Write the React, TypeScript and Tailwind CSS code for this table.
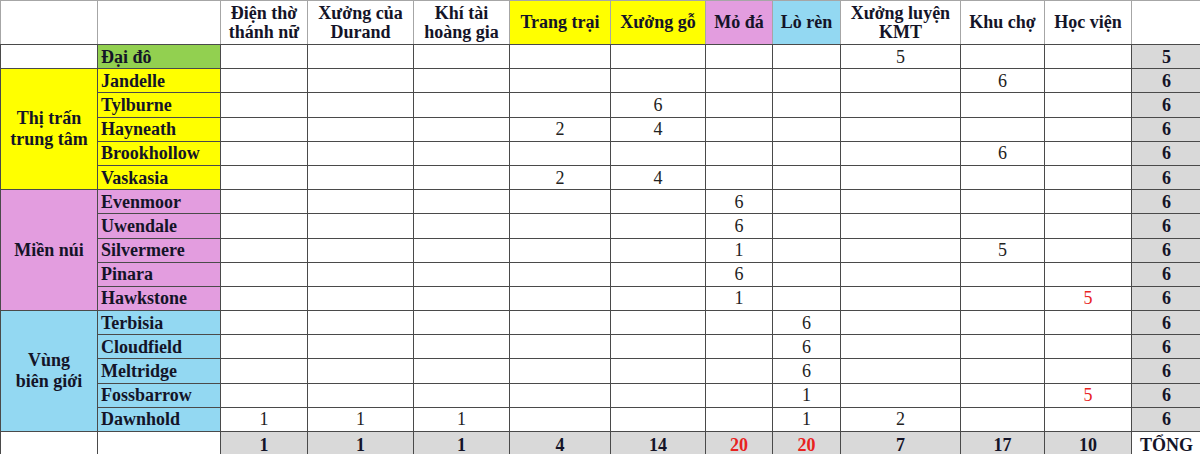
const cols = [
  { label: ["Điện thờ", "thánh nữ"], w: "w-[87px]", bg: "bg-white" },
  { label: ["Xưởng của", "Durand"], w: "w-[106px]", bg: "bg-white" },
  { label: ["Khí tài", "hoàng gia"], w: "w-[96px]", bg: "bg-white" },
  { label: ["Trang trại"], w: "w-[101px]", bg: "bg-[#ffff00]" },
  { label: ["Xưởng gỗ"], w: "w-[95px]", bg: "bg-[#ffff00]" },
  { label: ["Mỏ đá"], w: "w-[67px]", bg: "bg-[#e39ddf]" },
  { label: ["Lò rèn"], w: "w-[68px]", bg: "bg-[#93d8f2]" },
  { label: ["Xưởng luyện", "KMT"], w: "w-[120px]", bg: "bg-white" },
  { label: ["Khu chợ"], w: "w-[84px]", bg: "bg-white" },
  { label: ["Học viện"], w: "w-[87px]", bg: "bg-white" },
];

type Row = {
  name: string;
  bg: string;
  vals: Record<number, number>;
  red?: number[];
  total: number;
};

const groups: { region: string[]; bg: string; rows: Row[] }[] = [
  {
    region: ["Thị trấn", "trung tâm"],
    bg: "bg-[#ffff00]",
    rows: [
      { name: "Jandelle", bg: "bg-[#ffff00]", vals: { 8: 6 }, total: 6 },
      { name: "Tylburne", bg: "bg-[#ffff00]", vals: { 4: 6 }, total: 6 },
      { name: "Hayneath", bg: "bg-[#ffff00]", vals: { 3: 2, 4: 4 }, total: 6 },
      { name: "Brookhollow", bg: "bg-[#ffff00]", vals: { 8: 6 }, total: 6 },
      { name: "Vaskasia", bg: "bg-[#ffff00]", vals: { 3: 2, 4: 4 }, total: 6 },
    ],
  },
  {
    region: ["Miền núi"],
    bg: "bg-[#e39ddf]",
    rows: [
      { name: "Evenmoor", bg: "bg-[#e39ddf]", vals: { 5: 6 }, total: 6 },
      { name: "Uwendale", bg: "bg-[#e39ddf]", vals: { 5: 6 }, total: 6 },
      { name: "Silvermere", bg: "bg-[#e39ddf]", vals: { 5: 1, 8: 5 }, total: 6 },
      { name: "Pinara", bg: "bg-[#e39ddf]", vals: { 5: 6 }, total: 6 },
      { name: "Hawkstone", bg: "bg-[#e39ddf]", vals: { 5: 1, 9: 5 }, red: [9], total: 6 },
    ],
  },
  {
    region: ["Vùng", "biên giới"],
    bg: "bg-[#93d8f2]",
    rows: [
      { name: "Terbisia", bg: "bg-[#93d8f2]", vals: { 6: 6 }, total: 6 },
      { name: "Cloudfield", bg: "bg-[#93d8f2]", vals: { 6: 6 }, total: 6 },
      { name: "Meltridge", bg: "bg-[#93d8f2]", vals: { 6: 6 }, total: 6 },
      { name: "Fossbarrow", bg: "bg-[#93d8f2]", vals: { 6: 1, 9: 5 }, red: [9], total: 6 },
      { name: "Dawnhold", bg: "bg-[#93d8f2]", vals: { 0: 1, 1: 1, 2: 1, 6: 1, 7: 2 }, total: 6 },
    ],
  },
];

const totals = [1, 1, 1, 4, 14, 20, 20, 7, 17, 10];

const cell = "border border-[#4a4a4a] p-0";

function Values({ row }: { row: Row }) {
  return (
    <>
      {cols.map((_, i) => (
        <td
          key={i}
          className={`${cell} text-center bg-white ${row.red?.includes(i) ? "text-[#e8231f]" : "text-[#222]"}`}
        >
          {row.vals[i] ?? ""}
        </td>
      ))}
      <td className={`${cell} bg-[#d9d9d9] text-center font-bold`}>{row.total}</td>
    </>
  );
}

export default function App() {
  return (
    <div className="w-[1200px] h-[454px] overflow-hidden bg-white [font-family:Liberation_Serif,serif]">
      <table className="table-fixed border-collapse w-[1201px] text-[18px] leading-[20px] text-[#141428]">
        <colgroup>
          <col className="w-[97px]" />
          <col className="w-[123px]" />
          {cols.map((c, i) => (
            <col key={i} className={c.w} />
          ))}
          <col className="w-[70px]" />
        </colgroup>
        <thead>
          <tr className="h-[44px]">
            <th className="border border-[#a6a6a6] border-b-[#4a4a4a] bg-white p-0" />
            <th className="border border-[#a6a6a6] border-b-[#4a4a4a] bg-white p-0" />
            {cols.map((c, i) => (
              <th
                key={i}
                className={`border border-[#a6a6a6] border-b-[#4a4a4a] p-0 font-bold leading-[19px] ${c.bg}`}
              >
                {c.label.map((l) => (
                  <div key={l}>{l}</div>
                ))}
              </th>
            ))}
            <th className="border border-[#a6a6a6] border-b-[#4a4a4a] bg-white p-0" />
          </tr>
        </thead>
        <tbody>
          <tr className="h-[24.2px]">
            <td className={`${cell} bg-white`} />
            <td className={`${cell} bg-[#92d050] pl-[3px] font-bold`}>Đại đô</td>
            <Values row={{ name: "Đại đô", bg: "", vals: { 7: 5 }, total: 5 }} />
          </tr>
          {groups.map((g) =>
            g.rows.map((r, j) => (
              <tr key={r.name} className="h-[24.2px]">
                {j === 0 && (
                  <td
                    rowSpan={g.rows.length}
                    className={`${cell} ${g.bg} text-center align-middle font-bold leading-[21px]`}
                  >
                    {g.region.map((l) => (
                      <div key={l}>{l}</div>
                    ))}
                  </td>
                )}
                <td className={`${cell} ${r.bg} pl-[3px] font-bold`}>{r.name}</td>
                <Values row={r} />
              </tr>
            ))
          )}
          <tr className="h-[26px]">
            <td className={`${cell} bg-white`} />
            <td className={`${cell} bg-white`} />
            {totals.map((t, i) => (
              <td
                key={i}
                className={`${cell} bg-[#d9d9d9] text-center font-bold ${i === 5 || i === 6 ? "text-[#e8231f]" : ""}`}
              >
                {t}
              </td>
            ))}
            <td className={`${cell} bg-white text-center font-bold`}>TỔNG</td>
          </tr>
        </tbody>
      </table>
    </div>
  );
}
